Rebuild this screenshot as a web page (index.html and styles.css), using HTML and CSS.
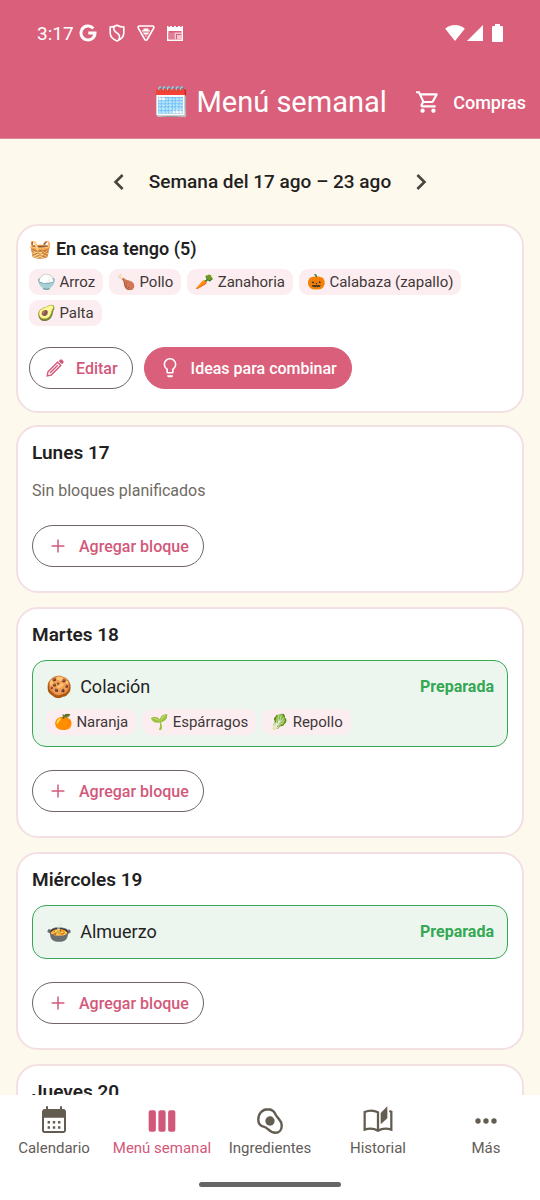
FILE: index.html
```
<!DOCTYPE html>
<html lang="es">
<head>
    <meta charset="UTF-8">
    <meta name="viewport" content="width=device-width, initial-scale=1.0">
    <title>Menú semanal</title>
    <link rel="stylesheet" href="styles.css">
</head>
<body>
    <header class="header">
        <div class="status-bar">
            <div class="status-left">
                <span class="clock">3:17</span>
                <svg class="status-icon" viewBox="0 0 18 18"><path d="M14.3 4.4A7 7 0 1 0 16 9H9.3" fill="none" stroke="#fff" stroke-width="3"/></svg>
                <svg class="status-icon" viewBox="0 0 18 18"><path d="M9 1.2C7 2.4 4.600 3 2.200 3v6c0 4 3 6.500 6.800 8 3.800-1.500 6.800-4 6.800-8V3C13.400 3 11 2.400 9 1.200zM6 3c-.8 3 .5 4.500 3 6s3.500 4 1.500 7" fill="none" stroke="#fff" stroke-width="1.600"/></svg>
                <svg class="status-icon" viewBox="0 0 18 18"><path d="M2.500 2h13a1.300 1.300 0 0 1 1.200 2L10.200 15.500a1.400 1.400 0 0 1-2.400 0L1.300 4a1.300 1.300 0 0 1 1.200-2z" fill="none" stroke="#fff" stroke-width="1.600"/><path d="M6.500 4.500h5v1.800h1.500v1.300H5V6.300h1.500zM6 8.600h6l-1 2H7zM8 11.400h2l-1 1.600z" fill="#fff"/></svg>
                <svg class="status-icon" viewBox="0 0 18 18"><path d="M1 2h1.500v1h1.500V2h2v1h2V2h2v1h2V2h2v1h1.500V2H17v15H1z" fill="#fff"/><path d="M2.500 7h13v8.500h-13z" fill="#d95f7a"/><path d="M2.500 8.500h6V15h-6z" fill="#e07d93"/><path d="M8.500 8.500h7v1.500h-7zM8.500 10h1.500v5.500H8.500zM11 11h4.500v4.500H11z" fill="#f3c4cf"/></svg>
            </div>
            <div class="status-right">
                <svg width="20" height="18" viewBox="0 0 20 18"><path d="M10 17L.2 4.800C2.800 2.200 6.200 1 10 1s7.200 1.200 9.800 3.800z" fill="#fff"/></svg>
                <svg width="16" height="18" viewBox="0 0 16 18"><path d="M16 1v16H0z" fill="#fff"/></svg>
                <svg class="battery" width="11" height="18" viewBox="0 0 11 18"><path d="M3 0h5v2h2a1 1 0 0 1 1 1v14a1 1 0 0 1-1 1H1a1 1 0 0 1-1-1V3a1 1 0 0 1 1-1h2z" fill="#fff"/></svg>
            </div>
        </div>
        <div class="app-bar">
            <h1 class="title"><span class="emoji">🗓️</span> Menú semanal</h1>
            <button class="shop-button" type="button">
                <svg width="26" height="26" viewBox="0 0 24 24" fill="#fff"><path d="M15.550 13c.75 0 1.410-.41 1.750-1.030l3.580-6.490A.996.996 0 0 0 20.010 4H5.210l-.94-2H1v2h2l3.600 7.590-1.350 2.440C4.520 15.370 5.480 17 7 17h12v-2H7l1.100-2h7.450zM6.160 6h12.150l-2.760 5H8.530L6.160 6zM7 18c-1.100 0-1.990.9-1.990 2S5.900 22 7 22s2-.9 2-2-.9-2-2-2zm10 0c-1.100 0-1.990.9-1.990 2s.89 2 1.990 2 2-.9 2-2-.9-2-2-2z"/></svg>
                Compras
            </button>
        </div>
    </header>

    <main class="content">
        <div class="week-nav">
            <button class="arrow" type="button" aria-label="Semana anterior">
                <svg width="32" height="32" viewBox="0 0 24 24" fill="#4a4340"><path d="M15.410 7.410L14 6l-6 6 6 6 1.410-1.410L10.830 12z"/></svg>
            </button>
            <h2 class="week">Semana del 17 ago – 23 ago</h2>
            <button class="arrow" type="button" aria-label="Semana siguiente">
                <svg width="32" height="32" viewBox="0 0 24 24" fill="#4a4340"><path d="M10 6L8.590 7.410 13.170 12l-4.580 4.590L10 18l6-6z"/></svg>
            </button>
        </div>

        <section class="card pantry">
            <h3 class="pantry-title"><span class="emoji">🧺</span> En casa tengo (5)</h3>
            <ul class="chips">
                <li class="chip"><span class="emoji">🍚</span> Arroz</li>
                <li class="chip"><span class="emoji">🍗</span> Pollo</li>
                <li class="chip"><span class="emoji">🥕</span> Zanahoria</li>
                <li class="chip"><span class="emoji">🎃</span> Calabaza (zapallo)</li>
                <li class="chip"><span class="emoji">🥑</span> Palta</li>
            </ul>
            <div class="actions">
                <button class="button" type="button">
                    <svg width="22" height="22" viewBox="0 0 24 24"><path d="M3.500 20.500l.8-4.300L14.800 5.700l3.500 3.500L7.800 19.700zM6.500 17.500l8.500-8.500" fill="none" stroke="#d2587a" stroke-width="1.500"/><path d="M16 4.500l1.600-1.600a1.500 1.500 0 0 1 2 0l1.500 1.500a1.500 1.500 0 0 1 0 2L19.500 8z" fill="#d2587a"/></svg>
                    Editar
                </button>
                <button class="button button-fill" type="button">
                    <svg width="22" height="22" viewBox="0 0 24 24" fill="#fff"><path d="M9 20h6v1c0 .55-.45 1-1 1h-4c-.55 0-1-.45-1-1zM12 1C8.140 1 5 4.140 5 8c0 2.380 1.190 4.470 3 5.740V17c0 .55.45 1 1 1h6c.55 0 1-.45 1-1v-3.260c1.810-1.270 3-3.360 3-5.740 0-3.860-3.140-7-7-7zm2.850 11.600l-.65.500v3.200H9.800v-3.200l-.65-.5A5.400 5.400 0 0 1 6.700 8a5.300 5.300 0 0 1 10.600 0c0 1.700-.9 3.500-2.450 4.600z"/></svg>
                    Ideas para combinar
                </button>
            </div>
        </section>

        <section class="card">
            <h3 class="day">Lunes 17</h3>
            <p class="empty">Sin bloques planificados</p>
            <button class="button" type="button">
                <svg width="22" height="22" viewBox="0 0 24 24" fill="#d2587a"><path d="M19 12.800h-6.200V19h-1.600v-6.200H5v-1.600h6.200V5h1.600v6.200H19z"/></svg>
                Agregar bloque
            </button>
        </section>

        <section class="card">
            <h3 class="day">Martes 18</h3>
            <div class="block">
                <div class="block-head">
                    <span class="emoji">🍪</span>
                    <span class="meal">Colación</span>
                    <span class="state">Preparada</span>
                </div>
                <ul class="chips">
                    <li class="chip"><span class="emoji">🍊</span> Naranja</li>
                    <li class="chip"><span class="emoji">🌱</span> Espárragos</li>
                    <li class="chip"><span class="emoji">🥬</span> Repollo</li>
                </ul>
            </div>
            <button class="button" type="button">
                <svg width="22" height="22" viewBox="0 0 24 24" fill="#d2587a"><path d="M19 12.800h-6.200V19h-1.600v-6.200H5v-1.600h6.200V5h1.600v6.200H19z"/></svg>
                Agregar bloque
            </button>
        </section>

        <section class="card">
            <h3 class="day">Miércoles 19</h3>
            <div class="block">
                <div class="block-head">
                    <span class="emoji">🍲</span>
                    <span class="meal">Almuerzo</span>
                    <span class="state">Preparada</span>
                </div>
            </div>
            <button class="button" type="button">
                <svg width="22" height="22" viewBox="0 0 24 24" fill="#d2587a"><path d="M19 12.800h-6.200V19h-1.600v-6.200H5v-1.600h6.200V5h1.600v6.200H19z"/></svg>
                Agregar bloque
            </button>
        </section>

        <section class="card">
            <h3 class="day">Jueves 20</h3>
        </section>
    </main>

    <footer class="bottom">
        <nav class="tabs">
            <a class="tab" href="#calendario">
                <svg width="32" height="32" viewBox="0 0 24 24" fill="#635c50"><path d="M19 3h-1V1h-1.500v2h-9V1H6v2H5c-1.110 0-1.990.9-1.990 2L3 19a2 2 0 0 0 2 2h14c1.100 0 2-.9 2-2V5c0-1.100-.9-2-2-2zm.5 16.500h-15V9.500h15v10z"/><path d="M7.200 12H9v1.800H7.200zM11.100 12h1.800v1.800h-1.800zM15 12h1.800v1.800H15zM7.200 16H9v1.800H7.200zM11.100 16h1.800v1.800h-1.800zM15 16h1.800v1.800H15z"/></svg>
                Calendario
            </a>
            <a class="tab tab-active" href="#menu">
                <svg width="32" height="32" viewBox="0 0 24 24" fill="#d2587a"><rect x="2" y="4" width="5.400" height="16" rx="1.500"/><rect x="9.300" y="4" width="5.400" height="16" rx="1.500"/><rect x="16.600" y="4" width="5.400" height="16" rx="1.500"/></svg>
                Menú semanal
            </a>
            <a class="tab" href="#ingredientes">
                <svg width="32" height="32" viewBox="0 0 24 24"><path d="M10.500 3.200C6 3.200 3.200 6.500 3.200 11c0 3.500 1.800 4.800 4.500 5.400 3 .6 3.600 4.400 8.300 4.400 3 0 4.800-2.400 4.800-5.300 0-4-2.500-4.800-4-7.300-1.300-2.400-2.500-5-6.300-5z" fill="none" stroke="#635c50" stroke-width="1.800"/><circle cx="12" cy="12" r="3.500" fill="#635c50"/></svg>
                Ingredientes
            </a>
            <a class="tab" href="#historial">
                <svg width="32" height="32" viewBox="0 0 24 24" fill="none" stroke="#635c50" stroke-width="1.700"><path d="M20.500 4.500l1.500.6V18.500c-3-1-7-1-10 .8-3-1.800-7-1.800-10-.8V5.300c3-1.300 7-1.300 10 .2v13.500"/><path d="M19 1l-5 5v8.500l5-4.500z" fill="#635c50" stroke="none"/></svg>
                Historial
            </a>
            <a class="tab" href="#mas">
                <svg width="32" height="32" viewBox="0 0 24 24" fill="#635c50"><circle cx="6" cy="12" r="2"/><circle cx="12" cy="12" r="2"/><circle cx="18" cy="12" r="2"/></svg>
                Más
            </a>
        </nav>
        <div class="home-bar"></div>
    </footer>
</body>
</html>
```
FILE: styles.css
```
* {
    box-sizing: border-box;
}

body {
    font-family: Roboto, "Noto Color Emoji", sans-serif;
    margin: 0;
    height: 100vh;
    display: flex;
    flex-direction: column;
    background-color: #fdf9ed;
    color: #241f1f;
}

h1, h2, h3, p, ul {
    margin: 0;
    padding: 0;
}

svg {
    flex-shrink: 0;
}

button {
    font-family: inherit;
    background: none;
    border: none;
    padding: 0;
    cursor: pointer;
}

/* header */
.header {
    background-color: #d95f7a;
    color: white;
    border-bottom: 1px solid #d9899a;
}

.status-bar {
    display: flex;
    justify-content: space-between;
    align-items: center;
    height: 66px;
    padding: 0 37px;
}

.status-left {
    display: flex;
    align-items: center;
    gap: 11px;
}

.clock {
    font-size: 19px;
    margin-right: -6px;
}

.status-icon {
    width: 18px;
    height: 18px;
}

.status-right {
    display: flex;
    align-items: center;
    gap: 2px;
}

.battery {
    margin-left: 7px;
}

.app-bar {
    display: grid;
    grid-template-columns: 1fr auto 1fr;
    align-items: center;
    height: 72px;
    padding: 0 14px;
}

.title {
    grid-column: 2;
    font-size: 29px;
    font-weight: 400;
}

.shop-button {
    display: flex;
    align-items: center;
    justify-self: end;
    gap: 12px;
    color: white;
    font-size: 18px;
    font-weight: 500;
}

/* week list */
.content {
    flex: 1;
    min-height: 0;
    overflow-y: auto;
    scrollbar-width: none;
    padding: 0 16px;
}

.week-nav {
    display: flex;
    justify-content: center;
    align-items: center;
    gap: 14px;
    height: 85px;
}

.arrow {
    display: flex;
}

.week {
    font-size: 19px;
    font-weight: 500;
}

.card {
    background-color: white;
    border: 2px solid #f3e0e3;
    border-radius: 22px;
    padding: 14px 14px 24px;
    margin-bottom: 14px;
}

.pantry {
    padding: 11px 11px 22px;
    margin-bottom: 12px;
}

.pantry-title {
    font-size: 18px;
    font-weight: 600;
    line-height: 24px;
    margin-bottom: 8px;
}

.chips {
    display: flex;
    flex-wrap: wrap;
    gap: 5px 6px;
    list-style: none;
}

.chip {
    background-color: #fceef0;
    border-radius: 9px;
    padding: 0 8px;
    font-size: 15px;
    line-height: 26px;
    color: #403838;
}

.actions {
    display: flex;
    gap: 11px;
    margin-top: 21px;
}

.button {
    display: flex;
    align-items: center;
    gap: 10px;
    height: 42px;
    padding: 0 14px;
    border: 1px solid #6f6468;
    border-radius: 21px;
    color: #d2587a;
    font-size: 16px;
    font-weight: 500;
}

.button-fill {
    background-color: #d95f7a;
    border-color: #d95f7a;
    color: white;
}

.day {
    font-size: 19px;
    font-weight: 600;
    line-height: 24px;
}

.empty {
    color: #6f6a64;
    font-size: 16px;
    line-height: 24px;
    margin: 14px 0 22px;
}

.block {
    background-color: #ecf6ef;
    border: 1px solid #35a853;
    border-radius: 14px;
    padding: 11px 13px;
    margin: 13px 0 23px;
}

.block-head {
    display: flex;
    align-items: center;
    gap: 8px;
    line-height: 30px;
}

.block-head .emoji {
    font-size: 21px;
}

.block .chips {
    margin-top: 7px;
}

.meal {
    font-size: 18px;
}

.state {
    margin-left: auto;
    color: #35a853;
    font-size: 16px;
    font-weight: 700;
}

/* bottom navigation */
.bottom {
    background-color: white;
    height: 105px;
}

.tabs {
    display: flex;
    padding-top: 10px;
}

.tab {
    flex: 1;
    display: flex;
    flex-direction: column;
    align-items: center;
    gap: 1px;
    color: #635c58;
    font-size: 15px;
    line-height: 20px;
    text-decoration: none;
    white-space: nowrap;
}

.tab-active {
    color: #d2587a;
}

.home-bar {
    width: 142px;
    height: 5px;
    margin: 24px auto 0;
    border-radius: 3px;
    background-color: #666;
}
```
